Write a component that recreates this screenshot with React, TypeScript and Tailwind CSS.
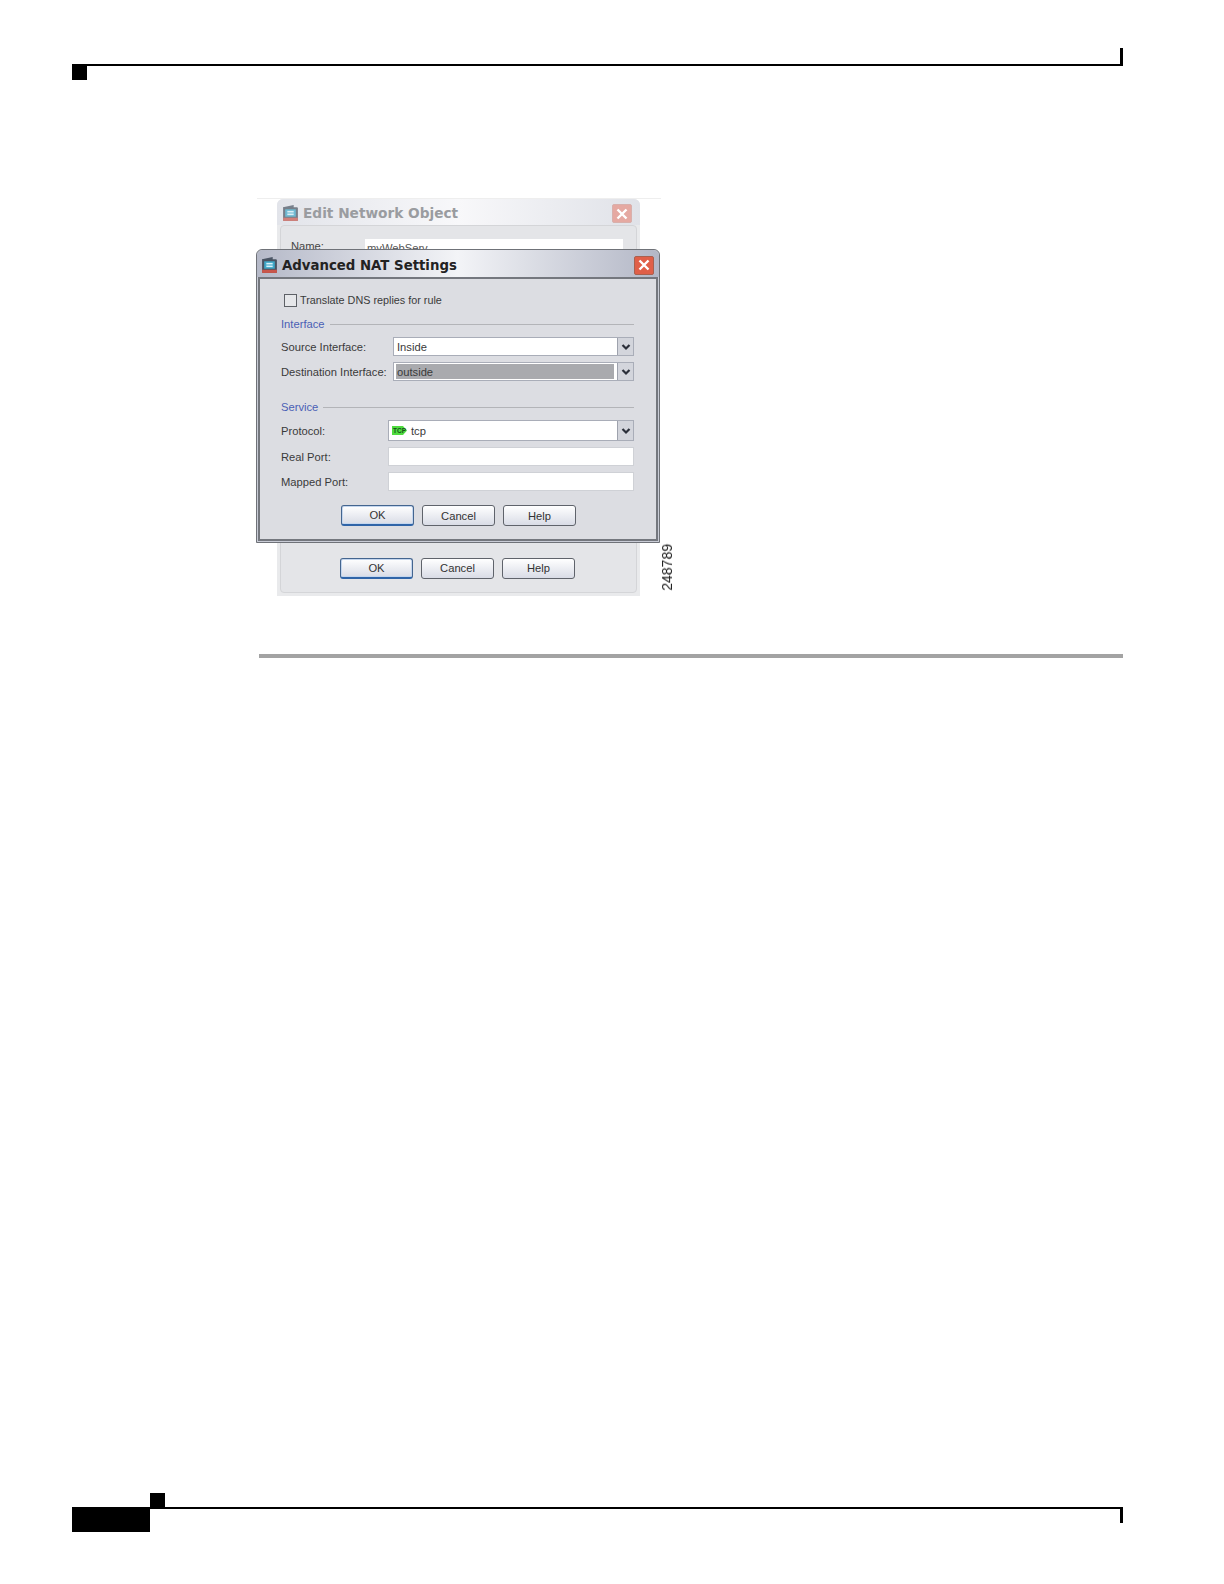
import type { ReactNode } from "react";

const uiFont = "font-['Liberation_Sans',Arial,sans-serif]";

export default function App() {
  return (
    <main className="relative flex h-[1584px] w-[1224px] flex-col bg-white">
      <PageHeader />

      <section className="relative ml-[257px] mt-[118px] h-[398px] w-[420px] blur-[0.5px]">
        <div className="mb-0 h-px w-[404px] bg-[#eeeeee]" />
        <EditNetworkObject />
        <AdvancedNatSettings />
        <span className="absolute left-[403px] top-[346px] rotate-180 font-['Liberation_Sans',Arial,sans-serif] text-[14px] leading-[14px] text-[#222] [writing-mode:vertical-rl]">
          248789
        </span>
      </section>

      <div className="ml-[259px] mt-[58px] h-[4px] w-[864px] bg-[#a3a3a3]" />

      <PageFooter />
    </main>
  );
}

function PageHeader() {
  return (
    <header>
      <div className="ml-[72px] mt-[48px] h-[18px] w-[1051px] border-b-2 border-r-[3px] border-black" />
      <div className="ml-[72px] h-[14px] w-[15px] bg-black" />
    </header>
  );
}

function PageFooter() {
  return (
    <footer className="ml-[72px] mt-auto w-[1051px] pb-[52px]">
      <div className="ml-[78px] h-[14px] w-[15px] bg-black" />
      <div className="flex items-start">
        <div className="h-[25px] w-[78px] bg-black" />
        <div className="h-[16px] flex-1 border-r-[3px] border-t-2 border-black" />
      </div>
    </footer>
  );
}

function EditNetworkObject() {
  return (
    <div className={`ml-[20px] flex h-[397px] w-[363px] flex-col rounded-t-md bg-[#e9eaec] ${uiFont}`}>
      <div className="flex h-[26px] items-center justify-between rounded-t-md bg-linear-to-r from-[#e2e4ea] via-[#f8f8fa] to-[#e0e2e8] pl-[5px] pr-[8px] pt-[3px]">
        <div className="flex items-center gap-[4px]">
          <AppIcon faded />
          <span className="font-['DejaVu_Sans',sans-serif] text-[13.7px] font-bold text-[#9a9ca0]">
            Edit Network Object
          </span>
        </div>
        <CloseButton faded />
      </div>

      <div className="mx-[3px] mb-[3px] flex flex-1 flex-col rounded-sm border border-[#d4d5d8] bg-[#e4e5e8]">
        <div className="flex items-start pl-[10px] pr-[13px] pt-[13px]">
          <span className="w-[74px] text-[11.2px] leading-[14px] text-[#444]">Name:</span>
          <div className="flex-1 bg-white pl-[2px] pt-[2px] text-[11.2px] leading-[14px] text-[#555]">
            myWebServ
          </div>
        </div>

        <div className="mt-auto flex gap-[8px] pb-[13px] pl-[59px]">
          <DialogButton primary>OK</DialogButton>
          <DialogButton>Cancel</DialogButton>
          <DialogButton>Help</DialogButton>
        </div>
      </div>
    </div>
  );
}

function AdvancedNatSettings() {
  return (
    <div
      className={`absolute -left-px top-[51px] flex h-[294px] w-[404px] flex-col rounded-t-md border border-[#6f7278] bg-[#c9ccd6] ${uiFont}`}
    >
      <div className="flex h-[27px] items-center justify-between rounded-t-md bg-linear-to-r from-[#b5b9c8] via-[#f3f4f7] to-[#b3b7c6] pl-[4px] pr-[5px] pt-[3px]">
        <div className="flex items-center gap-[4px]">
          <AppIcon />
          <span className="relative top-px font-['DejaVu_Sans',sans-serif] text-[13.3px] font-bold text-[#222]">
            Advanced NAT Settings
          </span>
        </div>
        <CloseButton />
      </div>

      <div className="mx-[1px] mb-[1px] flex-1 border-2 border-[#74777e] bg-[#dcdde2] pl-[21px] pr-[22px] text-[11.2px] leading-[14px] text-[#3a3a3a]">
        <label className="mt-[14px] flex items-center gap-[3px] pl-[3px] text-[10.8px]">
          <span className="h-[13px] w-[13px] border border-[#5d6066] bg-[#e6e7ea]" />
          Translate DNS replies for rule
        </label>

        <SectionTitle className="mt-[10px]">Interface</SectionTitle>

        <div className="mt-[6px] flex items-center">
          <span className="w-[112px]">Source Interface:</span>
          <SelectBox>
            <span className="pl-[3px]">Inside</span>
          </SelectBox>
        </div>

        <div className="mt-[6px] flex items-center">
          <span className="w-[112px] whitespace-nowrap">Destination Interface:</span>
          <SelectBox>
            <span className="ml-[2px] flex h-[15px] flex-1 items-center bg-[#a9aaae] pl-[1px]">outside</span>
          </SelectBox>
        </div>

        <SectionTitle className="mt-[19px]">Service</SectionTitle>

        <div className="mt-[6px] flex items-center">
          <span className="w-[107px]">Protocol:</span>
          <SelectBox tall>
            <span className="flex items-center gap-[4px] pl-[3px]">
              <TcpBadge />
              tcp
            </span>
          </SelectBox>
        </div>

        <PortRow className="mt-[6px]" label="Real Port:" />
        <PortRow className="mt-[6px]" label="Mapped Port:" />

        <div className="mt-[14px] flex gap-[8px] pl-[60px]">
          <DialogButton primary>OK</DialogButton>
          <DialogButton>Cancel</DialogButton>
          <DialogButton>Help</DialogButton>
        </div>
      </div>
    </div>
  );
}

function SectionTitle({ children, className }: { children: ReactNode; className: string }) {
  return (
    <div className={`flex items-center gap-[5px] text-[#4a5fb5] ${className}`}>
      {children}
      <div className="h-px flex-1 bg-[#b3b4b8]" />
    </div>
  );
}

function SelectBox({ children, tall = false }: { children: ReactNode; tall?: boolean }) {
  return (
    <div
      className={`flex flex-1 items-center border border-[#a9adb8] bg-white ${tall ? "h-[21px]" : "h-[19px]"}`}
    >
      <div className="flex min-w-0 flex-1 items-center">{children}</div>
      <div className="ml-[3px] flex h-full w-[16px] items-center justify-center border-l border-[#9ea2ad] bg-[#d3d5dc]">
        <svg width="10" height="8" viewBox="0 0 10 8" fill="none" stroke="#2b2f3a" strokeWidth="2.2">
          <path d="M1.5 2 5 5.5 8.5 2" />
        </svg>
      </div>
    </div>
  );
}

function PortRow({ label, className }: { label: string; className: string }) {
  return (
    <div className={`flex items-center ${className}`}>
      <span className="w-[107px]">{label}</span>
      <div className="h-[19px] flex-1 border border-[#cfd1d6] bg-white" />
    </div>
  );
}

function DialogButton({ children, primary = false }: { children: ReactNode; primary?: boolean }) {
  return (
    <button
      className={`flex h-[21px] w-[73px] items-center justify-center rounded-[3px] border bg-linear-to-b from-white to-[#d9dce6] text-[11.2px] text-[#333] ${
        primary ? "border-[#44658f] border-b-2 border-b-[#2f64a8] shadow-[inset_0_0_0_1px_#c4d6ee]" : "border-[#5f636b]"
      }`}
    >
      {children}
    </button>
  );
}

function CloseButton({ faded = false }: { faded?: boolean }) {
  return (
    <div
      className={`flex h-[19px] w-[20px] items-center justify-center rounded-[2px] border ${
        faded ? "border-[#d8b0ac] bg-[#e5a9a2]" : "border-[#a9604f] bg-[#e05f48]"
      }`}
    >
      <svg width="14" height="14" viewBox="0 0 14 14" fill="none" stroke="#fff" strokeWidth="2.4">
        <path d="M2.5 2.5 11.5 11.5M11.5 2.5 2.5 11.5" />
      </svg>
    </div>
  );
}

function AppIcon({ faded = false }: { faded?: boolean }) {
  return (
    <svg width="17" height="18" viewBox="0 0 16 17" className={faded ? "opacity-70" : ""}>
      <path d="M1 3 11 1v3H1z" fill="#4c5666" />
      <rect x="1" y="3" width="14" height="13" rx="1" fill="#4a5462" />
      <rect x="3" y="5" width="10" height="7" fill="#3fa9c9" />
      <rect x="5" y="6.5" width="6" height="1.5" fill="#d8f2fa" />
      <rect x="5" y="9" width="6" height="1.5" fill="#d8f2fa" />
      <rect x="1" y="13" width="14" height="3" fill="#c9564b" />
    </svg>
  );
}

function TcpBadge() {
  return (
    <svg width="15" height="9" viewBox="0 0 15 9">
      <path d="M0 0h11l4 4.5L11 9H0z" fill="#4fdc3f" />
      <text x="1" y="7" fontSize="6.5" fontWeight="700" fill="#14501a" fontFamily="Liberation Sans">
        TCP
      </text>
    </svg>
  );
}
